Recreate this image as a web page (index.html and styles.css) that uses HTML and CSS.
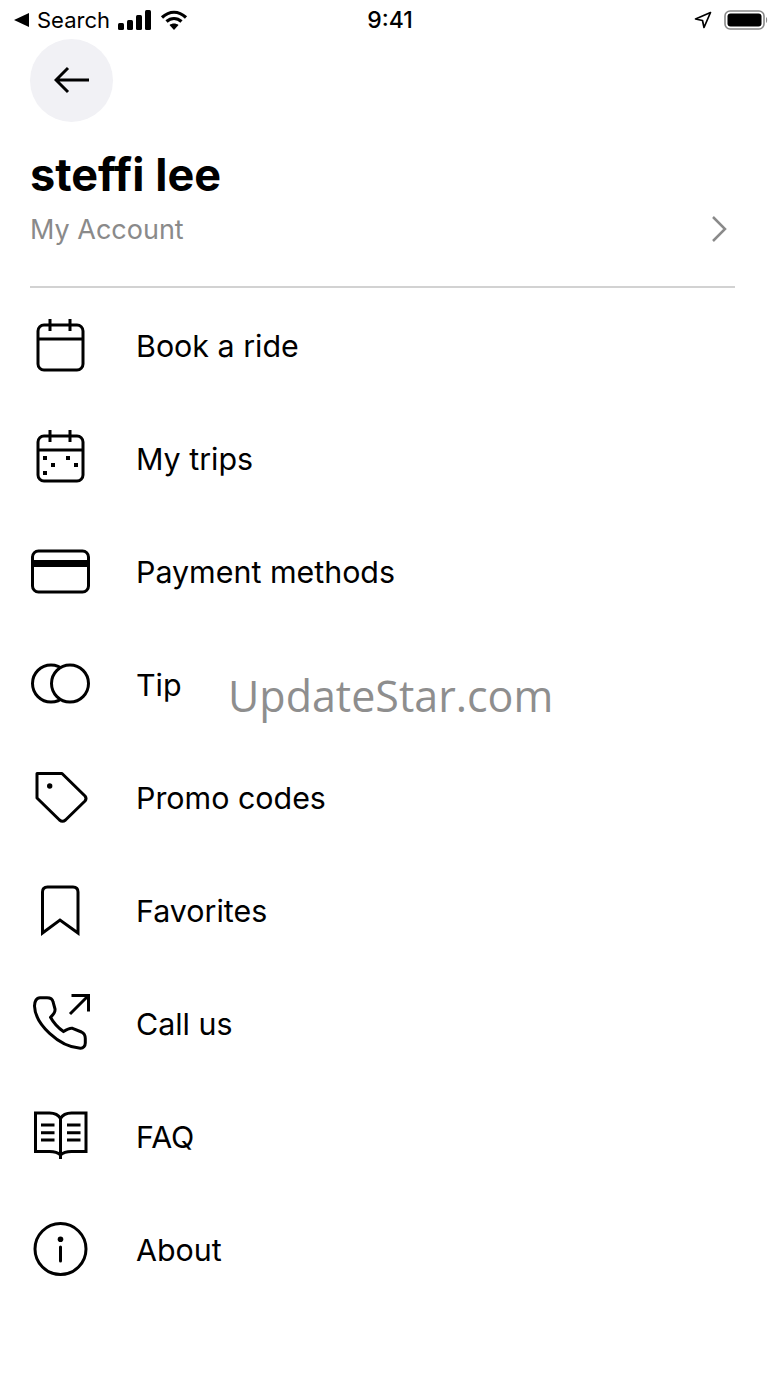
FILE: index.html
```html
<!DOCTYPE html>
<html lang="en">
<head>
    <meta charset="UTF-8">
    <title>My Account</title>
    <link rel="stylesheet" href="styles.css">
</head>
<body>
    <div class="status-bar">
        <div class="status-left">
            <svg class="back-tri" width="15" height="14" viewBox="0 0 15 14"><path d="M15 0v14L0 7z"/></svg>
            <span class="status-search">Search</span>
            <svg class="signal" width="34" height="20" viewBox="0 0 34 20"><rect x="0" y="13" width="6" height="7" rx="1.5"/><rect x="9" y="10" width="6" height="10" rx="1.5"/><rect x="18" y="5" width="6" height="15" rx="1.5"/><rect x="27" y="0" width="6" height="20" rx="1.5"/></svg>
            <svg class="wifi" width="28" height="20" viewBox="0 0 28 20"><path d="M2 7.5C9.500 .5 18.500 .5 26 7.500" fill="none" stroke="#000" stroke-width="3.200"/><path d="M6.500 11.500c4.500-4 10.500-4 15 0" fill="none" stroke="#000" stroke-width="3.200"/><path d="M14 20l-4.500-5c2.500-2 6.500-2 9 0z"/></svg>
        </div>
        <div class="status-time">9:41</div>
        <div class="status-right">
            <svg width="18" height="18" viewBox="0 0 18 18"><path d="M16.500 1.500L1.500 8l7 1.500 1.500 7z" fill="none" stroke="#000" stroke-width="1.700" stroke-linejoin="round"/></svg>
            <svg class="battery" width="44" height="20" viewBox="0 0 44 20"><rect x="1" y="1" width="39" height="18" rx="5" fill="none" stroke="#888" stroke-width="1.600"/><rect x="3.500" y="3.500" width="34" height="13" rx="3"/><path d="M42 7c1.500 .5 1.500 5.500 0 6z" fill="#888"/></svg>
        </div>
    </div>

    <div class="back-btn">
        <svg width="36" height="28" viewBox="0 0 36 28"><path d="M35 14H2M14 2L2 14l12 12" fill="none" stroke="#000" stroke-width="3"/></svg>
    </div>

    <div class="profile">
        <div class="profile-name">steffi lee</div>
        <div class="account-row">
            <span class="account-label">My Account</span>
            <svg width="16" height="28" viewBox="0 0 16 28"><path d="M2 2l12 12L2 26" fill="none" stroke="#8a8a8a" stroke-width="2.500"/></svg>
        </div>
    </div>

    <div class="menu">
        <div class="menu-item">
            <svg class="menu-icon" viewBox="0 0 62 62"><rect x="8" y="10" width="45" height="45" rx="6"/><path d="M8 24h45M20 4v12M40 4v12"/></svg>
            <span>Book a ride</span>
        </div>
        <div class="menu-item">
            <svg class="menu-icon" viewBox="0 0 62 62"><rect x="8" y="8" width="45" height="45" rx="6"/><path d="M8 22h45M20 2v12M40 2v12"/><path class="solid" d="M13 28h4v4h-4zM21 35h4v4h-4zM36 28h4v4h-4zM44 35h4v4h-4zM13 43h4v4h-4z"/></svg>
            <span>My trips</span>
        </div>
        <div class="menu-item">
            <svg class="menu-icon" viewBox="0 0 62 62"><rect x="2.500" y="10" width="56" height="41" rx="6"/><path class="solid" d="M2 19h57v7H2z"/></svg>
            <span>Payment methods</span>
        </div>
        <div class="menu-item">
            <svg class="menu-icon" viewBox="0 0 62 62"><circle cx="21" cy="29.500" r="18.500"/><circle class="white" cx="40" cy="29.500" r="18.500"/></svg>
            <span>Tip</span>
        </div>
        <div class="menu-item">
            <svg class="menu-icon" viewBox="0 0 62 62"><path d="M7 6.500h25l23 22.500q2 2.500 0 5L35.500 53q-3 2.500-6 0L7 31z" stroke-linejoin="round"/><circle class="solid" cx="19.700" cy="19" r="2.700"/></svg>
            <span>Promo codes</span>
        </div>
        <div class="menu-item">
            <svg class="menu-icon" viewBox="0 0 62 62"><path d="M12.500 53V12q0-5 5-5h25.500q5 0 5 5v41L30 40z"/></svg>
            <span>Favorites</span>
        </div>
        <div class="menu-item">
            <svg class="menu-icon" viewBox="0 0 62 62"><path d="M10 4.700h7c3 0 5.500 1.500 6 4l2 7.300c.5 3-1.500 5.500-4.500 8.300 3 5.500 7.500 10.500 13 14.300 3-2 6-3.800 9-3.300l9 3.700c3 1.500 3.800 3.500 3.800 6.500v4.500c0 3-2 5.500-5 5.300C29 54 5 31 4.500 13c0-4.500 2-8.300 5.500-8.300z" stroke-linejoin="round"/><path d="M40 21L58 3M41.500 2.500h17v16"/></svg>
            <span>Call us</span>
        </div>
        <div class="menu-item">
            <svg class="menu-icon" viewBox="0 0 62 62"><path d="M30.500 49c-3-3-7-3.500-11-3.500H5.500V7h14c5 0 9 2 11 5.500 2-3.500 6-5.500 11-5.500h14.500v38.500H41.500c-4 0-8 .5-11 3.500zM30.500 12v41"/><path d="M11 19h13.500M11 26.700h13.500M11 34h13.500M37 19h13.500M37 26.700h13.500M37 34h13.500"/></svg>
            <span>FAQ</span>
        </div>
        <div class="menu-item">
            <svg class="menu-icon" viewBox="0 0 62 62"><circle cx="30.500" cy="30" r="25.500"/><path d="M30.500 28v14" stroke-linecap="round"/><circle class="solid" cx="30.500" cy="20.300" r="2.800"/></svg>
            <span>About</span>
        </div>
    </div>

    <div class="watermark">UpdateStar.com</div>
</body>
</html>
```

FILE: styles.css
```css
body, html {
    margin: 0;
    padding: 0;
    background: #fff;
    color: #000;
    font-family: 'Inter', 'Liberation Sans', sans-serif;
}

body {
    position: relative;
    height: 1387px;
    overflow: hidden;
}

.status-bar {
    height: 39px;
    padding: 0 12px 0 14px;
    display: flex;
    align-items: center;
    justify-content: space-between;
    position: relative;
}

.status-left, .status-right {
    display: flex;
    align-items: center;
}

.status-search {
    font-size: 22px;
    margin: 0 8px 0 8px;
}

.wifi {
    margin-left: 8px;
}

.status-time {
    position: absolute;
    left: 0;
    right: 0;
    text-align: center;
    font-size: 23px;
    font-weight: 500;
}

.battery {
    margin-left: 12px;
}

.back-btn {
    width: 83px;
    height: 83px;
    margin-left: 30px;
    border-radius: 50%;
    background-color: #f1f1f5;
    display: flex;
    align-items: center;
    justify-content: center;
}

.back-btn svg {
    margin-bottom: 2px;
}

.profile {
    margin: 23px 45px 0 30px;
    padding-bottom: 33px;
    border-bottom: 2px solid #d2d2d2;
}

.profile-name {
    font-size: 45px;
    font-weight: 700;
    line-height: 60px;
}

.account-row {
    display: flex;
    align-items: center;
    justify-content: space-between;
    height: 48px;
    padding-right: 8px;
}

.account-label {
    font-size: 27px;
    color: #8a8a8a;
}

.menu {
    display: flex;
    flex-direction: column;
    margin-top: 1px;
}

.menu-item {
    height: 113px;
    display: flex;
    align-items: center;
    gap: 45px;
    padding-left: 30px;
    font-size: 30.400px;
}

.menu-item span {
    margin-left: -1px;
}

.menu-icon {
    width: 62px;
    height: 62px;
    fill: none;
    stroke: #000;
    stroke-width: 3;
}

.menu-icon .solid {
    fill: #000;
    stroke: none;
}

.menu-icon .white {
    fill: #fff;
}

.watermark {
    position: absolute;
    left: 228px;
    top: 666px;
    font-family: 'Open Sans', sans-serif;
    font-size: 43px;
    color: #8e8e8e;
}
```
